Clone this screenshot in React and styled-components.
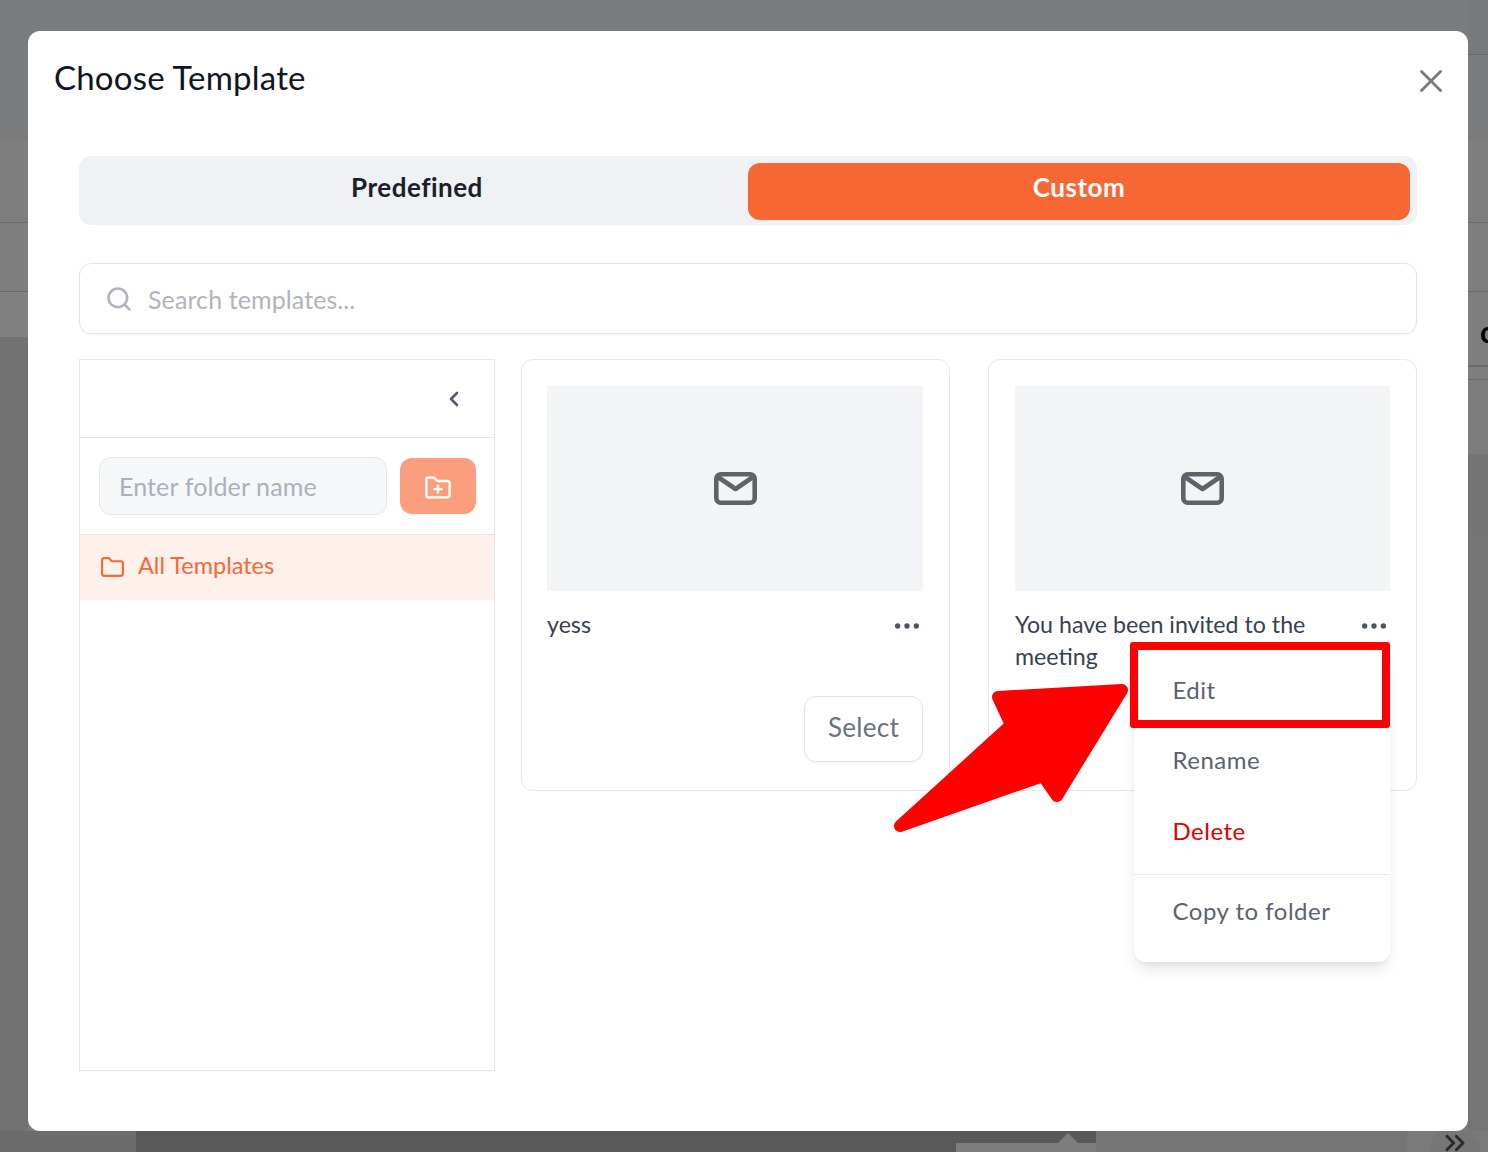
import React from 'react';
import styled, { createGlobalStyle } from 'styled-components';
import { ChevronLeft, ChevronsRight, Folder, FolderPlus, MoreHorizontal, Search, X } from 'lucide-react';

const GlobalStyle = createGlobalStyle`
  html, body {
    margin: 0;
    padding: 0;
    height: 1152px;
    overflow: hidden;
    background: #727272;
    font-family: Lato, "Open Sans", sans-serif;
  }
  * { box-sizing: border-box; }
`;

/* dimmed page behind the modal */
const Page = styled.div`
  position: relative;
  width: 1488px;
  height: 1152px;
  display: flex;
  flex-direction: column;
  overflow: hidden;
`;

const Backdrop = styled.div`
  flex: 1;
  display: flex;
  justify-content: space-between;
  background: #7a7b7d;
`;

const Rail = styled.div`
  width: ${p => p.$w}px;
  display: flex;
  flex-direction: column;
  overflow: hidden;
`;

const Band = styled.div`
  height: ${p => p.$h}px;
  flex-shrink: 0;
  background: ${p => p.$bg};
  border-bottom: ${p => (p.$line ? `${p.$line}px solid #6a6a6a` : 'none')};
`;

const Peek = styled.span`
  display: block;
  padding: 22px 0 0 12px;
  color: #000;
  font-size: 30px;
  font-weight: 700;
  line-height: 34px;
`;

const BottomStrip = styled.div`
  height: 21px;
  display: flex;
  background: #757575;
  overflow: hidden;
`;

const StripLeft = styled.div`
  width: 136px;
  background: #6b6b6b;
`;

const StripDark = styled.div`
  width: 960px;
  background: #595959;
  display: flex;
  justify-content: flex-end;
  align-items: flex-end;
`;

const StripEnd = styled.div`
  width: 81px;
  margin-left: auto;
  padding-left: 22px;
  background: #7a7a7a;
`;

const Tip = styled.div`
  position: relative;
  width: 140px;
  height: 9px;
  background: #7d7d7d;

  &::before {
    content: '';
    position: absolute;
    top: -7px;
    right: 21px;
    width: 14px;
    height: 14px;
    background: #7d7d7d;
    transform: rotate(45deg);
  }
`;

const ExpandRound = styled.div`
  width: 52px;
  height: 52px;
  border-radius: 50%;
  background: #767676;
  display: flex;
  justify-content: center;
  margin-top: -4px;
  padding-top: 0;
  color: #2b2b2b;
`;

/* modal */
const Modal = styled.div`
  position: absolute;
  top: 31px;
  left: 28px;
  width: 1440px;
  height: 1100px;
  background: #fff;
  border-radius: 12px;
  display: flex;
  flex-direction: column;
`;

const ModalHeader = styled.div`
  height: 125px;
  padding: 25px 18px 0 26px;
  display: flex;
  justify-content: space-between;
  align-items: flex-start;
`;

const ModalTitle = styled.h2`
  margin: 0;
  font-size: 33px;
  line-height: 42px;
  font-weight: 400;
  color: #11151f;
  letter-spacing: 0.2px;
`;

const CloseButton = styled.div`
  color: #7b7b7b;
  margin-top: 6px;
  display: flex;
`;

const ModalBody = styled.div`
  padding: 0 51px;
  display: flex;
  flex-direction: column;
`;

const Tabs = styled.div`
  height: 69px;
  padding: 7px 7px 5px;
  background: #f0f1f5;
  border-radius: 12px;
  display: grid;
  grid-template-columns: 1fr 1fr;
`;

const Tab = styled.div`
  display: flex;
  align-items: center;
  justify-content: center;
  padding-bottom: 9px;
  border-radius: 12px;
  font-size: 26px;
  font-weight: 700;
  letter-spacing: 0.5px;
  color: ${p => (p.$active ? '#fff' : '#1a202c')};
  background: ${p => (p.$active ? '#f66733' : 'transparent')};
`;

const SearchBox = styled.div`
  height: 71px;
  margin-top: 38px;
  border: 1px solid #e1e3e9;
  border-radius: 12px;
  box-shadow: 0 1px 2px rgba(0, 0, 0, 0.05);
  display: flex;
  align-items: center;
  gap: 15px;
  padding-left: 25px;
  color: #b0b4bd;
  font-size: 25px;
  letter-spacing: 0.1px;
`;

const Content = styled.div`
  margin-top: 25px;
  display: flex;
  gap: 26px;
  align-items: flex-start;
`;

const Sidebar = styled.aside`
  width: 416px;
  height: 712px;
  flex-shrink: 0;
  border: 1px solid #e5e5ec;
`;

const SidebarHead = styled.div`
  height: 78px;
  border-bottom: 1px solid #e5e5ec;
  display: flex;
  align-items: center;
  justify-content: flex-end;
  padding-right: 28px;
  color: #4f5b76;
`;

const FolderForm = styled.div`
  height: 96px;
  padding: 19px 18px 0 19px;
  display: flex;
  gap: 13px;
  align-items: flex-start;
`;

const FolderInput = styled.div`
  width: 288px;
  height: 58px;
  background: #f6f7f9;
  border: 1px solid #e5e7eb;
  border-radius: 12px;
  display: flex;
  align-items: center;
  padding-left: 19px;
  color: #a9b1bc;
  font-size: 25px;
  letter-spacing: 0.12px;
`;

const AddFolder = styled.div`
  width: 76px;
  height: 56px;
  margin-top: 1px;
  padding-top: 3px;
  background: #fb9e7d;
  border-radius: 12px;
  display: flex;
  align-items: center;
  justify-content: center;
  color: #fff;
`;

const FolderRow = styled.div`
  height: 66px;
  border-top: 1px solid #e5e5ec;
  background: #fef0eb;
  color: #f76833;
  display: flex;
  align-items: center;
  gap: 13px;
  padding-left: 20px;
  font-size: 23.5px;
`;

const FolderLabel = styled.span`
  padding-bottom: 6px;
`;

const Cards = styled.div`
  flex: 1;
  display: grid;
  grid-template-columns: 429px 429px;
  gap: 38px;
`;

const Card = styled.div`
  position: relative;
  height: 432px;
  border: 1px solid #e5e7eb;
  border-radius: 12px;
  padding: 26px 26px 28px ${p => p.$left}px;
  display: flex;
  flex-direction: column;
`;

const Thumb = styled.div`
  height: 205px;
  background: #f3f4f6;
  display: flex;
  align-items: center;
  justify-content: center;
`;

const CardMeta = styled.div`
  margin-top: 17px;
  display: flex;
  justify-content: space-between;
  align-items: flex-start;
  gap: 10px;
`;

const CardName = styled.div`
  font-size: 23.2px;
  line-height: 32px;
  color: #374151;
`;

const Dots = styled.div`
  color: #4b5563;
  display: flex;
  flex-shrink: 0;
  margin-top: 2px;
`;

const SelectButton = styled.div`
  margin-top: auto;
  align-self: flex-end;
  width: 119px;
  height: 66px;
  padding-bottom: 4px;
  border: 1px solid #e1e3e9;
  border-radius: 12px;
  box-shadow: 0 1px 2px rgba(0, 0, 0, 0.05);
  display: flex;
  align-items: center;
  justify-content: center;
  font-size: 26px;
  letter-spacing: 0.3px;
  color: #6b7280;
`;

/* dropdown on the second card */
const Menu = styled.div`
  position: absolute;
  top: 288px;
  right: 26px;
  width: 256px;
  background: #fff;
  border-radius: 12px;
  box-shadow: 0 10px 15px -3px rgba(0, 0, 0, 0.1), 0 4px 6px -2px rgba(0, 0, 0, 0.05);
  z-index: 2;
`;

const MenuGroup = styled.div`
  padding: ${p => p.$pad};
  border-top: ${p => (p.$divided ? '1px solid #e5e7eb' : 'none')};
`;

const MenuItem = styled.div`
  height: 70.5px;
  padding: 0 0 4px 38.5px;
  display: flex;
  align-items: center;
  font-size: 24px;
  letter-spacing: 0.5px;
  color: ${p => (p.$danger ? '#e00000' : '#5c6370')};
`;

/* red annotation drawn on the screenshot */
const Highlight = styled.div`
  position: absolute;
  top: -6px;
  left: -4px;
  width: 260px;
  height: 86px;
  border: 8px solid #ff0000;
  border-radius: 3px;
`;

const ArrowMark = styled.svg`
  position: absolute;
  left: 860px;
  top: 645px;
  z-index: 3;
`;

const MailIcon = () => (
  <svg width="43" height="33" viewBox="0 0 43 33" fill="none" stroke="#5f6269" strokeWidth="4.6" strokeLinejoin="round" strokeLinecap="round">
    <rect x="2.3" y="2.3" width="38.4" height="28.4" rx="4.5" />
    <path d="M4 5l17.5 12L39 5" />
  </svg>
);

const More = () => (
  <Dots>
    <MoreHorizontal size={32} strokeWidth={2} />
  </Dots>
);

export default function App() {
  return (
    <Page>
      <GlobalStyle />
      <Backdrop>
        <Rail $w={28}>
          <Band $h={139} $bg="#7a7b7d" />
          <Band $h={84} $bg="#7e7e7e" $line={1} />
          <Band $h={69} $bg="#7e7e7e" $line={1} />
          <Band $h={45} $bg="#808080" />
          <Band $h={794} $bg="#727272" />
        </Rail>
        <Rail $w={20}>
          <Band $h={55} $bg="#78797b" $line={1} />
          <Band $h={84} $bg="#7a7b7d" />
          <Band $h={84} $bg="#7e7e7e" $line={1} />
          <Band $h={69} $bg="#7e7e7e" $line={1} />
          <Band $h={75} $bg="#7e7e7e" $line={2}>
            <Peek>c</Peek>
          </Band>
          <Band $h={13} $bg="#7e7e7e" $line={1} />
          <Band $h={74} $bg="#7c7c7c" />
          <Band $h={77} $bg="#747474" />
          <Band $h={600} $bg="#757575" />
        </Rail>
      </Backdrop>
      <BottomStrip>
        <StripLeft />
        <StripDark>
          <Tip />
        </StripDark>
        <StripEnd>
          <ExpandRound>
            <ChevronsRight size={32} strokeWidth={2.2} />
          </ExpandRound>
        </StripEnd>
      </BottomStrip>

      <Modal>
        <ModalHeader>
          <ModalTitle>Choose Template</ModalTitle>
          <CloseButton>
            <X size={38} strokeWidth={1.8} />
          </CloseButton>
        </ModalHeader>
        <ModalBody>
          <Tabs>
            <Tab>Predefined</Tab>
            <Tab $active>Custom</Tab>
          </Tabs>
          <SearchBox>
            <Search size={28} strokeWidth={2.2} />
            Search templates...
          </SearchBox>
          <Content>
            <Sidebar>
              <SidebarHead>
                <ChevronLeft size={24} strokeWidth={2.6} />
              </SidebarHead>
              <FolderForm>
                <FolderInput>Enter folder name</FolderInput>
                <AddFolder>
                  <FolderPlus size={28} strokeWidth={2} />
                </AddFolder>
              </FolderForm>
              <FolderRow>
                <Folder size={25} strokeWidth={2} />
                <FolderLabel>All Templates</FolderLabel>
              </FolderRow>
            </Sidebar>
            <Cards>
              <Card $left={25}>
                <Thumb>
                  <MailIcon />
                </Thumb>
                <CardMeta>
                  <CardName>yess</CardName>
                  <More />
                </CardMeta>
                <SelectButton>Select</SelectButton>
              </Card>
              <Card $left={26}>
                <Thumb>
                  <MailIcon />
                </Thumb>
                <CardMeta>
                  <CardName>You have been invited to the meeting</CardName>
                  <More />
                </CardMeta>
                <Menu>
                  <MenuGroup $pad="8px 0 6px">
                    <MenuItem>Edit</MenuItem>
                    <MenuItem>Rename</MenuItem>
                    <MenuItem $danger>Delete</MenuItem>
                  </MenuGroup>
                  <MenuGroup $divided $pad="3px 0 14px">
                    <MenuItem>Copy to folder</MenuItem>
                  </MenuGroup>
                  <Highlight />
                </Menu>
              </Card>
            </Cards>
          </Content>
        </ModalBody>
        <ArrowMark width="250" height="170" viewBox="0 0 250 170">
          <path
            d="M234 14 L110 21 L123 49 L12 150 L155 100 L169 120 Z"
            fill="#ff0000"
            stroke="#ff0000"
            strokeWidth="12"
            strokeLinejoin="round"
          />
        </ArrowMark>
      </Modal>
    </Page>
  );
}
